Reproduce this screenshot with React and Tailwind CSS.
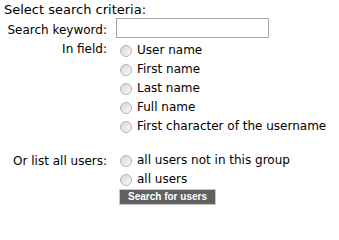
import React from "react";

const Radio = ({ label }) => (
  <label className="flex items-center h-[19px] whitespace-nowrap">
    <span className="ml-[4px] mr-[5px] w-[12px] h-[12px] rounded-full border border-[#b4b4b4] bg-gradient-to-br from-[#d6d6d6] to-[#fbfbfb] shrink-0" />
    <span>{label}</span>
  </label>
);

export default function App() {
  return (
    <div className="w-[339px] h-[217px] bg-white text-black font-['DejaVu_Sans',Verdana,sans-serif] pl-[4px] pt-[1px]">
      <div className="text-[13px] leading-[17px]">Select search criteria:</div>
      <div className="grid grid-cols-[103px_auto] gap-x-[9px] items-start text-[12px] leading-[15px]">
        <div className="text-right whitespace-nowrap h-[20px] leading-[20px] pt-[2px]">Search keyword:</div>
        <input type="text" className="w-[153px] h-[20px] border border-[#a9a9a9] bg-white outline-none" />

        <div className="text-right whitespace-nowrap pt-[4px]">In field:</div>
        <div className="flex flex-col pt-[3px]">
          <Radio label="User name" />
          <Radio label="First name" />
          <Radio label="Last name" />
          <Radio label="Full name" />
          <Radio label="First character of the username" />
        </div>

        <div className="text-right whitespace-nowrap mt-[15px] pt-[3px]">Or list all users:</div>
        <div className="flex flex-col mt-[15px]">
          <Radio label="all users not in this group" />
          <Radio label="all users" />
          <button className="self-start ml-[3px] w-[97px] h-[16px] bg-[#616161] border border-[#c8c8c8] text-white text-[10px] leading-[14px] font-bold whitespace-nowrap font-['Liberation_Sans',Arial,sans-serif]">
            Search for users
          </button>
        </div>
      </div>
    </div>
  );
}
